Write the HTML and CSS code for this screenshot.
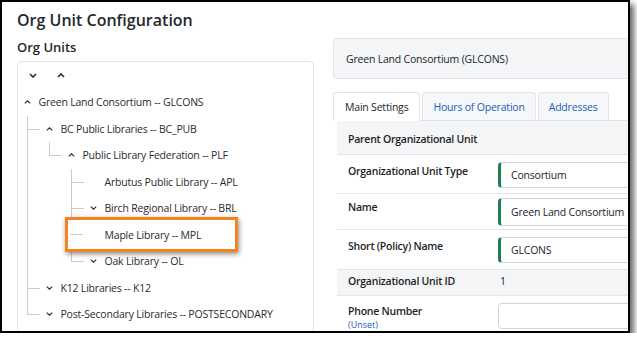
FILE: index.html
```html
<!DOCTYPE html>
<html lang="en">
<head>
<meta charset="utf-8">
<title>Org Unit Configuration</title>
<link rel="stylesheet" href="styles.css">
</head>
<body>
<div class="frame">
  <h1 class="title">Org Unit Configuration</h1>
  <div class="main">
    <section class="left">
      <h2 class="subtitle">Org Units</h2>
      <div class="tree-card">
        <div class="toolbar">
          <span class="tool"><svg width="8" height="5" viewBox="0 0 8 5"><path d="M1 1 L4 4 L7 1" fill="none" stroke="#333" stroke-width="1.7"/></svg></span>
          <span class="tool"><svg width="8" height="5" viewBox="0 0 8 5"><path d="M1 4 L4 1 L7 4" fill="none" stroke="#333" stroke-width="1.7"/></svg></span>
        </div>
        <ul class="tree root">
          <li>
            <div class="row"><span class="tog"><svg width="7" height="4" viewBox="0 0 7 4"><path d="M0.8 3.4 L3.5 0.8 L6.2 3.4" fill="none" stroke="#333" stroke-width="1.2"/></svg></span><span class="lbl">Green Land Consortium -- GLCONS</span></div>
            <ul class="tree">
              <li>
                <div class="row"><span class="tog"><svg width="7" height="4" viewBox="0 0 7 4"><path d="M0.8 3.4 L3.5 0.8 L6.2 3.4" fill="none" stroke="#333" stroke-width="1.2"/></svg></span><span class="lbl">BC Public Libraries -- BC_PUB</span></div>
                <ul class="tree">
                  <li>
                    <div class="row"><span class="tog"><svg width="7" height="4" viewBox="0 0 7 4"><path d="M0.8 3.4 L3.5 0.8 L6.2 3.4" fill="none" stroke="#333" stroke-width="1.2"/></svg></span><span class="lbl">Public Library Federation -- PLF</span></div>
                    <ul class="tree">
                      <li><div class="row"><span class="tog"></span><span class="lbl">Arbutus Public Library -- APL</span></div></li>
                      <li><div class="row"><span class="tog"><svg width="7" height="4" viewBox="0 0 7 4"><path d="M0.8 0.6 L3.5 3.2 L6.2 0.6" fill="none" stroke="#333" stroke-width="1.2"/></svg></span><span class="lbl">Birch Regional Library -- BRL</span></div></li>
                      <li><div class="row callout"><span class="tog"></span><span class="lbl">Maple Library -- MPL</span></div></li>
                      <li><div class="row"><span class="tog"><svg width="7" height="4" viewBox="0 0 7 4"><path d="M0.8 0.6 L3.5 3.2 L6.2 0.6" fill="none" stroke="#333" stroke-width="1.2"/></svg></span><span class="lbl">Oak Library -- OL</span></div></li>
                    </ul>
                  </li>
                </ul>
              </li>
              <li><div class="row"><span class="tog"><svg width="7" height="4" viewBox="0 0 7 4"><path d="M0.8 0.6 L3.5 3.2 L6.2 0.6" fill="none" stroke="#333" stroke-width="1.2"/></svg></span><span class="lbl">K12 Libraries -- K12</span></div></li>
              <li><div class="row"><span class="tog"><svg width="7" height="4" viewBox="0 0 7 4"><path d="M0.8 0.6 L3.5 3.2 L6.2 0.6" fill="none" stroke="#333" stroke-width="1.2"/></svg></span><span class="lbl">Post-Secondary Libraries -- POSTSECONDARY</span></div></li>
            </ul>
          </li>
        </ul>
      </div>
    </section>
    <section class="right">
      <div class="ou-header">Green Land Consortium (GLCONS)</div>
      <ul class="tabs">
        <li class="tab active">Main Settings</li>
        <li class="tab">Hours of Operation</li>
        <li class="tab">Addresses</li>
      </ul>
      <div class="form">
        <div class="frow shaded r1"><div class="flabel">Parent Organizational Unit</div><div class="fval"></div></div>
        <div class="frow r2"><div class="flabel">Organizational Unit Type</div><div class="fval"><input class="input valid" value="Consortium" readonly></div></div>
        <div class="frow r3"><div class="flabel">Name</div><div class="fval"><input class="input valid tall" value="Green Land Consortium" readonly></div></div>
        <div class="frow r4"><div class="flabel">Short (Policy) Name</div><div class="fval"><input class="input valid" value="GLCONS" readonly></div></div>
        <div class="frow shaded r5"><div class="flabel">Organizational Unit ID</div><div class="fval text">1</div></div>
        <div class="frow r6"><div class="flabel">Phone Number<a class="unset" href="#">(Unset)</a></div><div class="fval"><input class="input" value="" readonly></div></div>
      </div>
    </section>
  </div>
</div>
</body>
</html>
```
FILE: styles.css
```css
html, body {
  margin: 0;
  padding: 0;
  background: #fff;
}
body {
  font-family: "Open Sans", "Noto Sans", sans-serif;
  font-size: 10.5px;
  letter-spacing: -0.2px;
  color: #212529;
}
.frame {
  width: 630px;
  height: 333px;
  box-sizing: border-box;
  border: 2px solid #000;
  box-shadow: 4px 4px 6px rgba(0, 0, 0, 0.6);
  background: #fff;
  overflow: hidden;
  padding: 0 0 0 15px;
  display: flex;
  flex-direction: column;
}
.title {
  margin: 8px 0 8px;
  font-size: 16px;
  line-height: 20px;
  font-weight: 600;
  letter-spacing: 0;
  color: #24282c;
}
.main {
  flex: 1;
  min-height: 0;
  display: grid;
  grid-template-columns: 297px 340px;
  column-gap: 19px;
}
.left {
  display: flex;
  flex-direction: column;
  min-height: 0;
}
.subtitle {
  margin: 0 0 5px;
  font-size: 13px;
  line-height: 18px;
  font-weight: 600;
  letter-spacing: 0;
  color: #24282c;
}
.tree-card {
  flex: 1;
  margin-bottom: 2px;
  border: 1px solid #dfe2e6;
  border-radius: 5px;
  box-sizing: border-box;
}
.toolbar {
  height: 27px;
  display: flex;
  align-items: center;
  gap: 20px;
  padding-left: 11px;
}
.tool {
  display: flex;
  width: 8px;
  height: 5px;
}
.tree {
  list-style: none;
  margin: 0 0 0 6px;
  padding: 0;
}
.tree.root {
  margin: 0;
  padding-left: 2.5px;
}
.tree li {
  position: relative;
  padding-left: 16px;
}
.tree.root > li {
  padding-left: 0;
}
.tree li::before {
  content: "";
  position: absolute;
  left: 0;
  top: 0;
  width: 12px;
  height: 13px;
  border-left: 1px solid #cbcbcb;
  border-bottom: 1px solid #cbcbcb;
}
.tree li:not(:last-child)::after {
  content: "";
  position: absolute;
  left: 0;
  top: 13px;
  bottom: 0;
  border-left: 1px solid #cbcbcb;
}
.tree.root > li::before,
.tree.root > li::after {
  display: none;
}
.row {
  height: 26.5px;
  display: flex;
  align-items: center;
  white-space: nowrap;
  color: #2b2b2b;
}
.tog {
  width: 13px;
  flex: none;
  display: flex;
  justify-content: center;
  align-items: center;
  margin-right: 5px;
}
.callout {
  position: relative;
  z-index: 1;
}
.callout::before {
  content: "";
  position: absolute;
  left: -22px;
  top: -4.5px;
  width: 173px;
  height: 35px;
  box-sizing: border-box;
  border: 3px solid #f5841f;
  background: linear-gradient(#cbcbcb, #cbcbcb) no-repeat 2px 14px / 13px 1px, #fff;
  box-shadow: 1px 2px 5px rgba(0, 0, 0, 0.45);
  z-index: -1;
}
.right {
  display: flex;
  flex-direction: column;
  min-width: 0;
}
.ou-header {
  height: 41px;
  box-sizing: border-box;
  display: flex;
  align-items: center;
  padding-left: 12px;
  background: #f4f5f7;
  border: 1px solid #e1e4e8;
  border-radius: 4px;
  color: #212529;
}
.tabs {
  list-style: none;
  margin: 13px 0 0;
  padding: 0;
  display: flex;
  gap: 2px;
  border-bottom: 1px solid #dee2e6;
}
.tab {
  height: 28px;
  box-sizing: border-box;
  display: flex;
  align-items: center;
  padding: 0 10px;
  border: 1px solid #e1e4e8;
  border-bottom: none;
  border-radius: 4px 4px 0 0;
  background: #f6f7f9;
  color: #2160b8;
}
.tab.active {
  padding: 0 11px;
  background: #fff;
  color: #212529;
  height: 29px;
  margin-bottom: -1px;
}
.form {
  margin-left: 4px;
}
.frow {
  display: flex;
  align-items: flex-start;
  border-bottom: 1px solid #e3e6ea;
}
.frow.shaded {
  background: #f4f5f7;
}
.flabel {
  width: 161px;
  flex: none;
  box-sizing: border-box;
  padding: 1px 0 0 11px;
  font-weight: 600;
  letter-spacing: -0.25px;
  line-height: 16px;
  color: #1c1f23;
}
.fval {
  flex: 1;
  min-width: 0;
  line-height: 16px;
}
.fval.text {
  padding: 1px 0 0 2px;
}
.r1 { padding: 8.5px 0 7.5px; }
.r2 { padding: 7px 0 5px; }
.r3 { padding: 4px 0 3px; }
.r4 { padding: 7px 0 6px; }
.r5 { padding: 2px 0 6px; }
.r6 { padding: 6px 0 4px; }
.r6 .fval { padding-top: 1px; }
.input {
  display: block;
  width: 200px;
  height: 26px;
  box-sizing: border-box;
  margin: 0;
  border: 1px solid #ced4da;
  border-radius: 4px;
  padding: 0 10px 0 12px;
  font-family: "Open Sans", "Noto Sans", sans-serif;
  font-size: 10.5px;
  letter-spacing: -0.2px;
  color: #212529;
  background: #fff;
  outline: none;
}
.input.valid {
  border-left: 3px solid #1d7f50;
  padding-left: 10px;
}
.input.tall {
  height: 28px;
}
.unset {
  display: block;
  margin-top: 0;
  font-weight: 400;
  letter-spacing: 0;
  font-size: 9px;
  line-height: 11px;
  color: #2160b8;
  text-decoration: none;
}
```
